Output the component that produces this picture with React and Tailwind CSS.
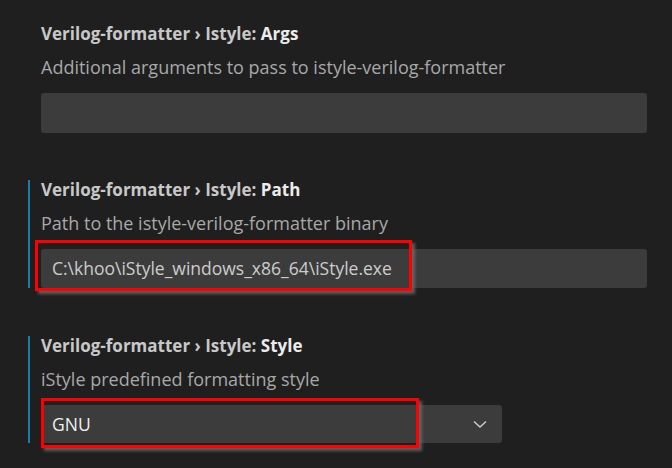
import React from "react";

function Title({ name }) {
  return (
    <div className="h-[20px] leading-[20px] text-[17px] font-bold text-[#c8c8c8] whitespace-nowrap">
      Verilog-formatter › Istyle: <span className="text-[#ececec]">{name}</span>
    </div>
  );
}

function Desc({ children }) {
  return (
    <div className="mt-[13px] h-[20px] leading-[20px] text-[18px] text-[#a8a8a8] whitespace-nowrap">
      {children}
    </div>
  );
}

export default function App() {
  return (
    <div
      className="w-[672px] h-[468px] bg-[#1f1f1f] overflow-hidden pt-[24px]"
      style={{ fontFamily: '"Open Sans", "Noto Sans", sans-serif' }}
    >
      {/* Args */}
      <div className="flex">
        <div className="w-[28px] shrink-0" />
        <div className="w-[2px] shrink-0" />
        <div className="pl-[11px] w-[617px]">
          <Title name="Args" />
          <Desc>Additional arguments to pass to istyle-verilog-formatter</Desc>
          <div className="mt-[16px] h-[40px] rounded-[3px] bg-[#3c3c3c]" />
        </div>
      </div>

      {/* Path */}
      <div className="flex mt-[47px]">
        <div className="w-[28px] shrink-0" />
        <div className="w-[2px] shrink-0 bg-[#197fa6]" />
        <div className="pl-[11px] w-[617px]">
          <Title name="Path" />
          <Desc>Path to the istyle-verilog-formatter binary</Desc>
          <div className="relative mt-[16px]">
            <div className="h-[39px] rounded-[3px] bg-[#3c3c3c] pl-[11px] flex items-center text-[17.5px] text-[#cccccc] whitespace-nowrap">
              C:\khoo\iStyle_windows_x86_64\iStyle.exe
            </div>
            <div className="absolute left-[-6px] top-[-9px] w-[377px] h-[51px] border-[3px] border-[#ff0000] shadow-[3px_3px_3px_rgba(110,110,110,0.8)]" />
          </div>
        </div>
      </div>

      {/* Style */}
      <div className="flex mt-[48px]">
        <div className="w-[28px] shrink-0" />
        <div className="w-[2px] shrink-0 bg-[#197fa6]" />
        <div className="pl-[11px] w-[617px]">
          <Title name="Style" />
          <Desc>iStyle predefined formatting style</Desc>
          <div className="relative mt-[16px] w-[461px]">
            <div className="h-[38px] rounded-[3px] bg-[#3c3c3c] pl-[11px] pr-[14px] flex items-center justify-between text-[17.5px] text-[#f0f0f0]">
              <span>GNU</span>
              <svg width="16" height="16" viewBox="0 0 16 16" fill="none">
                <path d="M2 5.5 L8 11 L14 5.5" stroke="#cccccc" strokeWidth="1.4" />
              </svg>
            </div>
            <div className="absolute left-[0px] top-[-7px] w-[378px] h-[50px] border-[3px] border-[#ff0000] shadow-[3px_3px_3px_rgba(110,110,110,0.8)]" />
          </div>
        </div>
      </div>
    </div>
  );
}
